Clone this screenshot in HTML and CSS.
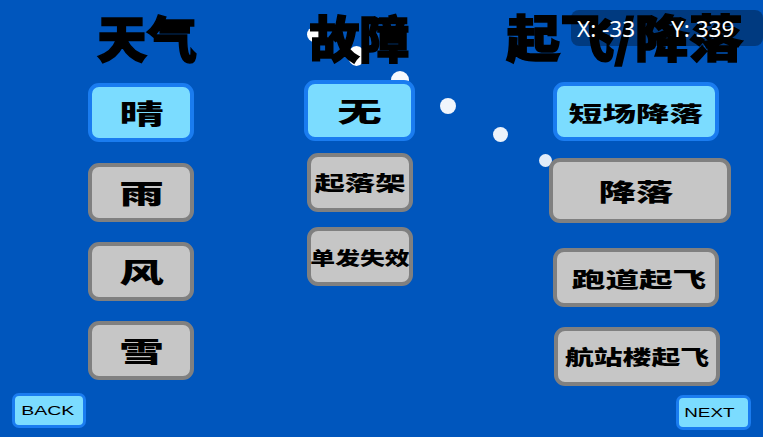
FILE: index.html
```html
<!DOCTYPE html>
<html lang="zh-CN">
<head>
    <meta charset="UTF-8">
    <meta name="viewport" content="width=device-width, initial-scale=1.0">
    <title>场景选择</title>
    <link rel="stylesheet" href="styles.css">
</head>
<body>
    <div class="dot dot-1"></div>
    <div class="dot dot-2"></div>
    <div class="dot dot-3"></div>
    <div class="dot dot-4"></div>
    <div class="dot dot-5"></div>
    <div class="dot dot-6"></div>

    <div class="coords"><span>X: -33</span><span>Y: 339</span></div>

    <div class="page">
        <div class="columns">
            <div class="column weather">
                <h2 class="title">天气</h2>
                <button class="button selected"><span class="label size-lg">晴</span></button>
                <button class="button"><span class="label size-lg">雨</span></button>
                <button class="button"><span class="label size-lg">风</span></button>
                <button class="button"><span class="label size-lg">雪</span></button>
            </div>
            <div class="column fault">
                <h2 class="title">故障</h2>
                <button class="button selected none"><span class="label size-lg">无</span></button>
                <button class="button gear"><span class="label size-sm">起落架</span></button>
                <button class="button engine"><span class="label size-xs">单发失效</span></button>
            </div>
            <div class="column flight">
                <h2 class="title">起飞/降落</h2>
                <button class="button selected short"><span class="label size-sm">短场降落</span></button>
                <button class="button landing"><span class="label size-md">降落</span></button>
                <button class="button runway"><span class="label size-sm">跑道起飞</span></button>
                <button class="button terminal"><span class="label size-sm narrow">航站楼起飞</span></button>
            </div>
        </div>
        <div class="footer">
            <button class="nav-button"><span class="nav-label">BACK</span></button>
            <button class="nav-button next"><span class="nav-label">NEXT</span></button>
        </div>
    </div>
</body>
</html>
```

FILE: styles.css
```css
* {
    box-sizing: border-box;
}
html, body {
    margin: 0;
    height: 100%;
}
body {
    position: relative;
    overflow: hidden;
    background-color: #0056bd;
    font-family: "Noto Sans CJK SC", "Noto Sans", sans-serif;
    color: #000;
}
.dot {
    position: absolute;
    border-radius: 50%;
    background-color: #fff;
}
.dot-1 { left: 307px; top: 27px; width: 15px; height: 15px; }
.dot-2 { left: 348px; top: 46px; width: 17px; height: 20px; }
.dot-3 { left: 391px; top: 71px; width: 18px; height: 18px; background-color: #f5f9fe; }
.dot-4 { left: 440px; top: 98px; width: 16px; height: 16px; background-color: #f0f5fc; }
.dot-5 { left: 493px; top: 127px; width: 15px; height: 15px; background-color: #ebf2fb; }
.dot-6 { left: 539px; top: 154px; width: 13px; height: 13px; background-color: #e2ecf9; }

.coords {
    position: absolute;
    z-index: 2;
    top: 10px;
    left: 571px;
    width: 192px;
    height: 36px;
    padding-left: 6px;
    display: flex;
    gap: 36px;
    align-items: center;
    border-radius: 8px;
    background-color: rgba(0, 0, 0, 0.32);
    color: #fff;
    font-family: "Noto Sans", sans-serif;
    font-size: 22.5px;
    white-space: nowrap;
}

.page {
    position: relative;
    z-index: 1;
    height: 100%;
    display: flex;
    flex-direction: column;
}
.columns {
    height: 393px;
    padding-left: 88px;
    display: flex;
}
.column {
    display: flex;
    flex-direction: column;
    align-items: center;
}
.weather { width: 106px; }
.fault { width: 111px; margin-left: 110px; }
.flight { width: 182px; margin-left: 134px; }

.title {
    margin: 0;
    height: 50px;
    margin-top: 11px;
    font-size: 50px;
    font-weight: 900;
    line-height: 50px;
    white-space: nowrap;
    -webkit-text-stroke: 1.5px #000;
}
.weather .title { transform: translateX(6px); }
.flight .title {
    margin-top: 10px;
    transform: translateX(-15px) scaleX(1.08);
}

.button {
    flex: none;
    width: 106px;
    height: 59px;
    margin: 0 0 20px;
    padding: 0;
    border: 4px solid #808080;
    border-radius: 11px;
    background-color: #c6c6c6;
    display: flex;
    align-items: center;
    justify-content: center;
    font-family: inherit;
    color: #000;
    white-space: nowrap;
}
.button.selected {
    border-color: #1a7cf0;
    background-color: #7bdcff;
}
.weather .button:first-of-type { margin: 22px 0 21px; }
.fault .none { width: 111px; height: 61px; margin: 19px 0 12px; }
.fault .gear { margin-bottom: 15px; }
.flight .button { width: 166px; margin-right: 8px; }
.flight .short { margin-top: 22px; margin-bottom: 17px; }
.flight .landing { width: 182px; height: 65px; margin-right: 0; margin-bottom: 25px; }
.flight .terminal { margin-right: 6px; }

.label {
    display: inline-block;
    font-weight: 900;
}
.size-lg { font-size: 27px; transform: scaleX(1.65); }
.size-md { font-size: 24px; transform: translateX(-4px) scaleX(1.55); }
.size-sm { font-size: 21px; transform: scaleX(1.6); }
.size-xs { font-size: 18px; transform: scaleX(1.38); }
.gear .size-sm { font-size: 20px; transform: scaleX(1.52); }
.runway .size-sm { transform: translateX(3px) scaleX(1.6); }
.size-sm.narrow { font-size: 20px; transform: scaleX(1.44); }

.footer {
    padding: 0 12px;
    display: flex;
    justify-content: space-between;
    align-items: flex-start;
}
.nav-button {
    width: 74px;
    height: 35px;
    padding: 0;
    border: 3px solid #1a7cf0;
    border-radius: 7px;
    background-color: #7bdcff;
    display: flex;
    align-items: center;
    justify-content: center;
    color: #000;
}
.nav-button.next {
    width: 75px;
    margin-top: 2px;
}
.nav-label {
    display: inline-block;
    font-family: "Liberation Sans", sans-serif;
    font-size: 13px;
    transform: translateX(-1px) scaleX(1.5);
}
.next .nav-label {
    transform: translateX(-4px) scaleX(1.45);
}
```
